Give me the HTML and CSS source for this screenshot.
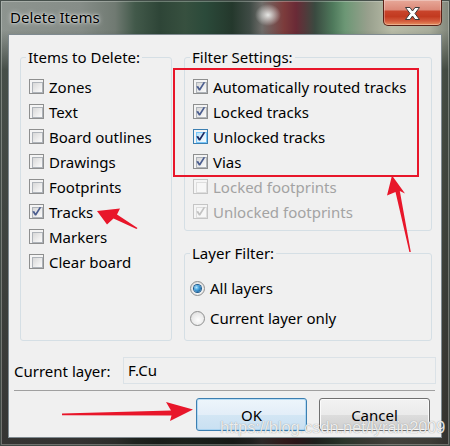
FILE: index.html
```html
<!DOCTYPE html>
<html>
<head>
<meta charset="utf-8">
<link rel="stylesheet" href="styles.css">
</head>
<body>
<div class="window">
  <div class="titlebar">
    <span class="title">Delete Items</span>
    <div class="close">
      <svg width="19" height="15" viewBox="0 0 19 15"><path d="M2.5 1.5 H7 L9.5 5 L12 1.5 H16.5 L12 7.5 L16.5 13.5 H12 L9.5 10 L7 13.5 H2.5 L7 7.5 Z" fill="#fff" stroke="#3b3b3b" stroke-width="1" stroke-linejoin="round"/></svg>
    </div>
  </div>
  <div class="client">
    <div class="groups">
      <fieldset class="grp items">
        <legend>Items to Delete:</legend>
        <div class="rows">
          <div class="row"><span class="cb"></span>Zones</div>
          <div class="row"><span class="cb"></span>Text</div>
          <div class="row"><span class="cb"></span>Board outlines</div>
          <div class="row"><span class="cb"></span>Drawings</div>
          <div class="row"><span class="cb"></span>Footprints</div>
          <div class="row"><span class="cb checked"><svg viewBox="0 0 15 15"><path d="M3.3 7.6 L5.2 7 L6.6 9.2 L10.6 3 L12.2 3.4 L7.2 11.6 L5.9 11.6 Z"/></svg></span>Tracks</div>
          <div class="row"><span class="cb"></span>Markers</div>
          <div class="row"><span class="cb"></span>Clear board</div>
        </div>
      </fieldset>
      <div class="rightcol">
        <fieldset class="grp filter">
          <legend>Filter Settings:</legend>
          <div class="rows">
            <div class="row"><span class="cb checked"><svg viewBox="0 0 15 15"><path d="M3.3 7.6 L5.2 7 L6.6 9.2 L10.6 3 L12.2 3.4 L7.2 11.6 L5.9 11.6 Z"/></svg></span>Automatically routed tracks</div>
            <div class="row"><span class="cb checked"><svg viewBox="0 0 15 15"><path d="M3.3 7.6 L5.2 7 L6.6 9.2 L10.6 3 L12.2 3.4 L7.2 11.6 L5.9 11.6 Z"/></svg></span>Locked tracks</div>
            <div class="row"><span class="cb checked focus"><svg viewBox="0 0 15 15"><path d="M3.3 7.6 L5.2 7 L6.6 9.2 L10.6 3 L12.2 3.4 L7.2 11.6 L5.9 11.6 Z"/></svg></span>Unlocked tracks</div>
            <div class="row"><span class="cb checked"><svg viewBox="0 0 15 15"><path d="M3.3 7.6 L5.2 7 L6.6 9.2 L10.6 3 L12.2 3.4 L7.2 11.6 L5.9 11.6 Z"/></svg></span>Vias</div>
            <div class="row disabled"><span class="cb"></span>Locked footprints</div>
            <div class="row disabled"><span class="cb checked"><svg viewBox="0 0 15 15"><path d="M3.3 7.6 L5.2 7 L6.6 9.2 L10.6 3 L12.2 3.4 L7.2 11.6 L5.9 11.6 Z"/></svg></span>Unlocked footprints</div>
          </div>
        </fieldset>
        <fieldset class="grp layer">
          <legend>Layer Filter:</legend>
          <div class="rows">
            <div class="row rrow"><span class="radio on"></span>All layers</div>
            <div class="row rrow"><span class="radio"></span>Current layer only</div>
          </div>
        </fieldset>
      </div>
    </div>
    <div class="cur">
      <span class="curlabel">Current layer:</span>
      <div class="field">F.Cu</div>
    </div>
    <div class="sep"></div>
    <div class="buttons">
      <button class="btn ok">OK</button>
      <button class="btn">Cancel</button>
    </div>
  </div>
  <svg class="annot" width="450" height="446" viewBox="0 0 450 446">
    <rect x="174" y="69" width="244" height="107" fill="none" stroke="#e8162a" stroke-width="2"/>
    <polygon fill="#e8162a" points="62,413.6 171,410.5 166,402 193,409.5 170,421 171.5,415.5 62,415.2"/>
    <polygon fill="#e8162a" points="97,211 120,208.5 117,214.5 137.5,228 136.5,229 113.5,218.5 107,224.5"/>
    <polygon fill="#e8162a" points="392,175.5 405,193.5 399.8,191 410.8,252 409.4,252 395.5,192 387,195.5"/>
  </svg>
  <div class="watermark">https://blog.csdn.net/lyrain2009</div>
</div>
</body>
</html>
```
FILE: styles.css
```css
* { box-sizing: border-box; }
html, body { margin: 0; padding: 0; }
body {
  width: 450px;
  height: 446px;
  overflow: hidden;
  font-family: "Noto Sans", "Liberation Sans", sans-serif;
  font-size: 15px;
  color: #000;
}
.window {
  position: relative;
  width: 450px;
  height: 446px;
  display: flex;
  flex-direction: column;
  background:
    radial-gradient(ellipse 13px 11px at 268px 15px, rgba(236,238,236,0.95), rgba(200,205,200,0) 100%),
    linear-gradient(to bottom, rgba(0,0,0,0) 0, rgba(0,0,0,0) 30px, rgba(12,22,16,0.55) 70px, rgba(16,12,12,0.7) 100%),
    linear-gradient(to right, #8d948f 0, #868d88 80px, #707a72 115px, #42594a 135px, #2e4537 160px, #37503f 185px, #2b4a3a 205px, #24382c 232px, #3f4b45 250px, #6e6c69 262px, #7c3b3b 284px, #6a2a36 296px, #3a4a40 315px, #4f7a5c 333px, #6c9775 345px, #98a08d 368px, #b9bca8 392px, #a9ad9c 430px, #7e8479 450px);
  box-shadow: inset 0 0 0 1px rgba(60,70,65,0.9), inset 0 0 0 2px rgba(220,225,222,0.35);
}
.titlebar {
  height: 34px;
  display: flex;
  align-items: flex-start;
  flex: none;
}
.title {
  padding: 7px 0 0 10px;
  line-height: 20px;
  font-size: 15px;
  color: #000;
  text-shadow: 0 0 5px rgba(255,255,255,0.9), 0 0 2px rgba(255,255,255,0.8);
}
.close {
  margin-left: auto;
  margin-right: 8px;
  width: 59px;
  height: 26px;
  border: 1px solid #5a2016;
  border-top: none;
  border-radius: 0 0 5px 5px;
  background: linear-gradient(#e7a899 0%, #dc8a79 38%, #c8432a 46%, #c23a20 66%, #d35a3c 84%, #e6915f 100%);
  box-shadow: inset 0 0 0 1px rgba(255,255,255,0.3);
  display: flex;
  align-items: center;
  justify-content: center;
}
.close svg { display: block; margin-top: 1px; }
.client {
  margin: 0 8px;
  height: 404px;
  flex: none;
  background: #f0f0f0;
  border: 1px solid #7f8a90;
  display: flex;
  flex-direction: column;
}
.groups {
  flex: none;
  display: grid;
  grid-template-columns: 152px 248px;
  grid-template-rows: 294px;
  column-gap: 12px;
  padding: 12px 0 0 11px;
}
fieldset.grp {
  margin: 0;
  padding: 0;
  min-width: 0;
  border: 1px solid #d5dfe5;
  border-radius: 3px;
}
legend {
  margin-left: 5px;
  padding: 0 2px;
  line-height: 20px;
}
.items { height: 294px; }
.rows { display: flex; flex-direction: column; }
.items .rows { padding: 7px 0 0 8px; }
.rightcol {
  display: flex;
  flex-direction: column;
  gap: 12px;
}
.filter { flex: none; height: 184px; }
.layer { flex: none; height: 98px; }
.filter .rows { padding: 7px 0 0 8px; }
.layer .rows { padding: 10px 0 0 5px; }
.row {
  flex: none;
  display: flex;
  align-items: center;
  gap: 5px;
  height: 25px;
  white-space: nowrap;
}
.rrow { height: 30px; }
.disabled { color: #a3a3a3; }
.cb {
  position: relative;
  width: 15px;
  height: 15px;
  flex: none;
  border: 1px solid #8e8f8f;
  background: #f4f4f4;
  padding: 2px;
}
.cb::before {
  content: "";
  display: block;
  width: 9px;
  height: 9px;
  border: 1px solid #aeb3b9;
  background: linear-gradient(135deg, #d8d8d8 0%, #ececec 55%, #fbfbfb 100%);
}
.cb svg {
  position: absolute;
  left: -1px;
  top: -1px;
  width: 15px;
  height: 15px;
  fill: #4b5d8f;
}
.cb.focus { border-color: #3c7fb1; }
.cb.focus::before { border-color: #79c6f9; background: linear-gradient(135deg, #b9e0f7 0%, #e4f3fd 60%, #f6fbff 100%); }
.cb.focus svg { fill: #1a2760; }
.disabled .cb { border-color: #c5c5c5; background: #f5f5f5; }
.disabled .cb::before { border-color: #dedede; background: #f7f7f7; }
.disabled .cb svg { fill: #c2c2c2; }
.radio {
  position: relative;
  width: 15px;
  height: 15px;
  flex: none;
  border-radius: 50%;
  border: 1px solid #8e8f8f;
  background: radial-gradient(circle at 55% 60%, #fdfdfd 0%, #eaeaea 55%, #d4d4d4 100%);
}
.radio.on::after {
  content: "";
  position: absolute;
  left: 3px;
  top: 3px;
  width: 7px;
  height: 7px;
  border-radius: 50%;
  background: radial-gradient(circle at 35% 35%, #b8e6fd 0%, #4fa8e0 35%, #1c6aa8 75%, #0f4f86 100%);
  box-shadow: 0 0 0 1px #1e5a8c;
}
.cur {
  flex: none;
  display: flex;
  align-items: center;
  margin-top: 16px;
  padding: 0 5px;
  height: 27px;
}
.curlabel { width: 109px; flex: none; }
.field {
  flex: 1;
  height: 27px;
  line-height: 25px;
  padding-left: 4px;
  border: 1px solid #dbe2e7;
  background: #f0f0f0;
}
.sep {
  flex: none;
  margin: 6px 6px 0 5px;
  height: 1px;
  background: #a0a0a0;
}
.buttons {
  flex: none;
  display: flex;
  justify-content: flex-end;
  gap: 12px;
  margin-top: 7px;
  padding-right: 11px;
}
.btn {
  width: 111px;
  height: 33px;
  padding: 0;
  font: inherit;
  color: #000;
  border: 1px solid #707070;
  border-radius: 3px;
  background: linear-gradient(#f2f2f2 0%, #ebebeb 50%, #dddddd 51%, #cfcfcf 100%);
  box-shadow: inset 0 0 0 1px #fbfbfb;
}
.btn.ok {
  border-color: #3c7fb1;
  background: linear-gradient(#edf5fb 0%, #e3eef8 50%, #d3e6f4 51%, #c9e0f2 100%);
  box-shadow: inset 0 0 0 1px rgba(140,200,240,0.55);
}
.annot {
  position: absolute;
  left: 0;
  top: 0;
  pointer-events: none;
}
.watermark {
  position: absolute;
  left: 220px;
  top: 417px;
  font-family: "Liberation Sans", sans-serif;
  font-size: 16.3px;
  line-height: 20px;
  color: rgba(255,255,255,0.85);
  text-shadow: 0 0 1px rgba(90,90,90,0.7);
  white-space: nowrap;
  pointer-events: none;
}
```
